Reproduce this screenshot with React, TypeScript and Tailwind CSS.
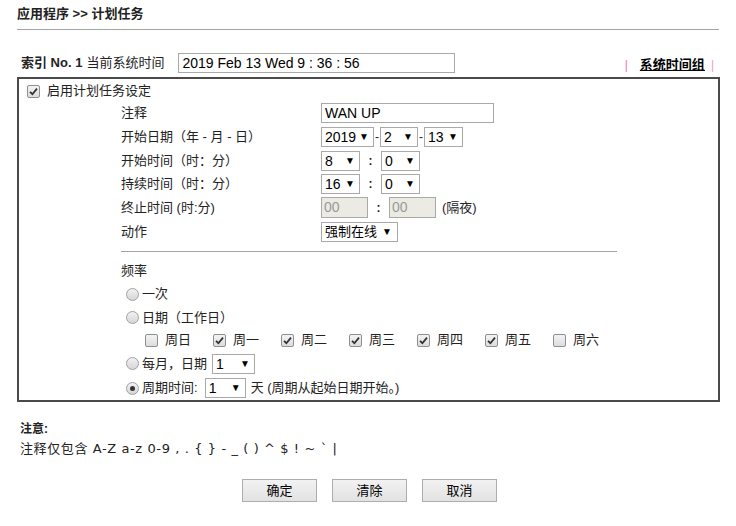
import React from "react";

const F = { fontFamily: '"Liberation Sans", Arial, "Noto Sans CJK SC", sans-serif' };

function Sel({ v, w, cls = "" }: { v: string; w: number; cls?: string }) {
  return (
    <div
      className={`h-[20px] border border-[#a9a9a9] bg-white flex items-center justify-between pl-[3px] pr-[4px] text-[14px] text-black ${cls}`}
      style={{ width: w }}
    >
      <span className="leading-none">{v}</span>
      <span className="text-[10px] leading-none">▼</span>
    </div>
  );
}

function Check({ on }: { on: boolean }) {
  return (
    <span className="inline-flex w-[13px] h-[13px] border border-[#8f8f8f] rounded-[2px] bg-gradient-to-b from-[#f4f4f4] to-[#dcdcdc] items-center justify-center">
      {on && (
        <svg width="9" height="9" viewBox="0 0 9 9">
          <path d="M1 4.8 L3.4 7.2 L8 1.6" stroke="#333" strokeWidth="1.8" fill="none" />
        </svg>
      )}
    </span>
  );
}

function Radio({ on }: { on: boolean }) {
  return (
    <span className="inline-flex w-[13px] h-[13px] rounded-full border border-[#a0a0a0] bg-gradient-to-b from-[#f2f2f2] to-[#d6d6d6] items-center justify-center">
      {on && <span className="w-[5px] h-[5px] rounded-full bg-[#333]" />}
    </span>
  );
}

function Row({ label, h, children }: { label: string; h: number; children?: React.ReactNode }) {
  return (
    <div className="flex items-center" style={{ height: h }}>
      <div className="w-[302px] shrink-0 pl-[102px] text-[13px] text-[#222] whitespace-nowrap">{label}</div>
      <div className="flex items-center">{children}</div>
    </div>
  );
}

const days: [string, boolean][] = [
  ["周日", false],
  ["周一", true],
  ["周二", true],
  ["周三", true],
  ["周四", true],
  ["周五", true],
  ["周六", false],
];

const noteText = "注释仅包含 A-Z a-z 0-9 , . { } - _ ( ) ^ $ ! ~ ` |";

export default function App() {
  return (
    <div className="w-[736px] h-[526px] bg-white text-[13px] text-[#222]" style={F}>
      <div className="mx-[17px] h-[30px] border-b border-[#a5a5a5] pt-[5px]">
        <div className="text-[13px] font-bold text-[#222] leading-[18px]">应用程序 &gt;&gt; 计划任务</div>
      </div>

      <div className="mx-[17px] mt-[23px] h-[20px] flex items-center">
        <span className="pl-[4px] font-bold text-[13px]">索引 No. 1</span>
        <span className="ml-[4px] text-[13px]">当前系统时间</span>
        <div className="ml-[14px] w-[277px] h-[20px] border border-[#a9a9a9] flex items-center px-[3px] text-[14px] text-black">
          2019 Feb 13 Wed 9 : 36 : 56
        </div>
        <div className="ml-auto flex items-center pr-[5px] pt-[3px]">
          <span className="text-[#f4749f] text-[12px]">|</span>
          <span className="ml-[12px] font-bold underline text-[13px] text-black">系统时间组</span>
          <span className="ml-[6px] text-[#f49ac0] text-[12px]">|</span>
        </div>
      </div>

      <div className="mx-[17px] mt-[4px] h-[325px] border-2 border-[#4a4a4a] w-[703px]">
        <div className="flex items-center h-[22px] pl-[8px] pt-[2px]">
          <Check on={true} />
          <span className="ml-[7px]">启用计划任务设定</span>
        </div>
        <Row label="注释" h={24}>
          <div className="w-[173px] h-[20px] border border-[#a9a9a9] flex items-center px-[3px] text-[14px] text-black">WAN UP</div>
        </Row>
        <Row label="开始日期（年 - 月 - 日）" h={24}>
          <Sel v="2019" w={53} />
          <span className="mx-[1px] text-[12px]">-</span>
          <Sel v="2" w={38} />
          <span className="mx-[1px] text-[12px]">-</span>
          <Sel v="13" w={39} />
        </Row>
        <Row label="开始时间（时：分）" h={23}>
          <Sel v="8" w={39} />
          <span className="w-[21px] text-center font-bold text-[12px]">:</span>
          <Sel v="0" w={39} />
        </Row>
        <Row label="持续时间（时：分）" h={23}>
          <Sel v="16" w={39} />
          <span className="w-[21px] text-center font-bold text-[12px]">:</span>
          <Sel v="0" w={39} />
        </Row>
        <Row label="终止时间 (时:分)" h={25}>
          <div className="w-[47px] h-[21px] border border-[#a9a9a9] bg-[#ebebe4] text-[#999] text-[14px] px-[2px] flex items-center">00</div>
          <span className="w-[21px] text-center font-bold text-[12px]">:</span>
          <div className="w-[47px] h-[21px] border border-[#a9a9a9] bg-[#ebebe4] text-[#999] text-[14px] px-[2px] flex items-center">00</div>
          <span className="ml-[6px]">(隔夜)</span>
        </Row>
        <Row label="动作" h={23}>
          <div className="w-[77px] h-[20px] border border-[#a9a9a9] bg-white flex items-center justify-between pl-[3px] pr-[5px] text-[13px] text-black">
            <span>强制在线</span>
            <span className="text-[10px]">▼</span>
          </div>
        </Row>
        <div className="ml-[102px] mt-[8px] w-[496px] border-t border-[#a5a5a5]" />
        <div className="ml-[102px] h-[22px] mt-[8px] flex items-center">频率</div>
        <div className="ml-[107px] h-[24px] flex items-center">
          <Radio on={false} />
          <span className="ml-[3px]">一次</span>
        </div>
        <div className="ml-[107px] h-[23px] flex items-center">
          <Radio on={false} />
          <span className="ml-[3px]">日期（工作日）</span>
        </div>
        <div className="ml-[126px] h-[22px] flex items-center">
          {days.map(([d, on]) => (
            <div key={d} className="w-[68px] flex items-center">
              <Check on={on} />
              <span className="ml-[7px]">{d}</span>
            </div>
          ))}
        </div>
        <div className="ml-[107px] h-[25px] flex items-center">
          <Radio on={false} />
          <span className="ml-[3px]">每月，日期</span>
          <Sel v="1" w={43} cls="ml-[5px]" />
        </div>
        <div className="ml-[107px] h-[24px] flex items-center">
          <Radio on={true} />
          <span className="ml-[3px]">周期时间:</span>
          <Sel v="1" w={41} cls="ml-[7px]" />
          <span className="ml-[5px]">天 (周期从起始日期开始。)</span>
        </div>
      </div>

      <div className="ml-[20px] mt-[19px] font-bold text-[12px] leading-[16px]">注意:</div>
      <div className="ml-[20px] mt-[4px] text-[13px] leading-[16px] tracking-[0.6px]" style={{ fontFamily: '"DejaVu Sans", Verdana, "Noto Sans CJK SC", sans-serif' }}>
        <span>{noteText}</span>
      </div>

      <div className="mt-[22px] flex gap-[15px] pl-[242px]">
        {["确定", "清除", "取消"].map((b) => (
          <div
            key={b}
            className="w-[75px] h-[23px] border border-[#adadad] bg-gradient-to-b from-[#f2f2f2] to-[#e2e2e2] flex items-center justify-center text-[13px] text-black"
          >
            {b}
          </div>
        ))}
      </div>
    </div>
  );
}
